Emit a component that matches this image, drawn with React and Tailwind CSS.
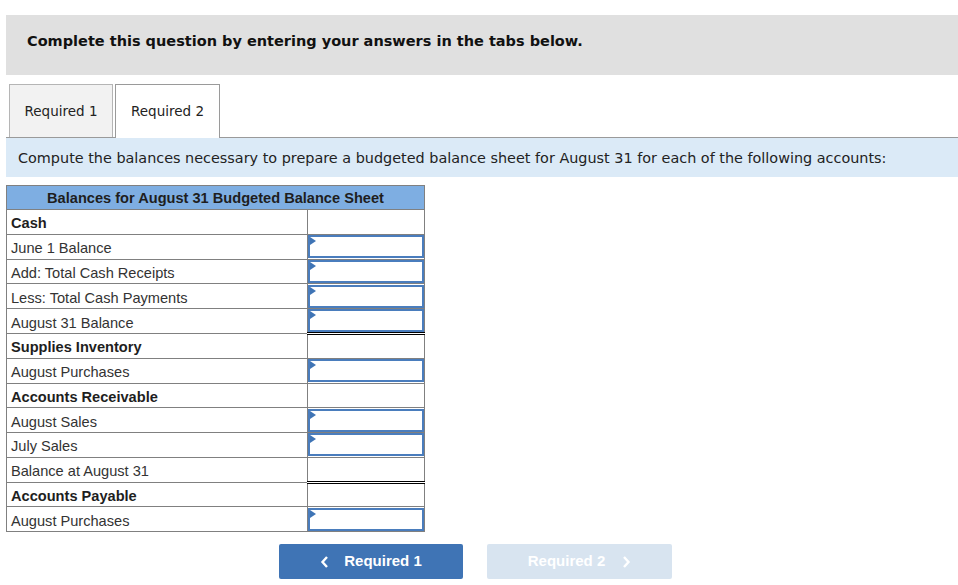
import React from 'react';

const rows = [
  { label: 'Cash', bold: true },
  { label: 'June 1 Balance', input: true },
  { label: 'Add: Total Cash Receipts', input: true },
  { label: 'Less: Total Cash Payments', input: true, line: 'single' },
  { label: 'August 31 Balance', input: true, line: 'double' },
  { label: 'Supplies Inventory', bold: true },
  { label: 'August Purchases', input: true },
  { label: 'Accounts Receivable', bold: true },
  { label: 'August Sales', input: true },
  { label: 'July Sales', input: true, line: 'single' },
  { label: 'Balance at August 31', line: 'double' },
  { label: 'Accounts Payable', bold: true },
  { label: 'August Purchases', input: true },
];

const AnswerCell = ({ input, line }) => {
  let lineClass = '';
  if (line === 'single') lineClass = 'border-b-black';
  if (line === 'double') lineClass = 'border-b-[3px] border-b-black border-double';
  return (
    <td className={`w-[117px] h-[24.75px] p-0 border border-[#808080] ${lineClass}`}>
      {input && (
        <div className="relative h-[23px] border-2 border-[#4a7dbd] bg-white">
          {/* little triangle marker */}
          <div className="absolute left-0 top-0 w-0 h-0 border-t-[4px] border-b-[4px] border-l-[6px] border-t-transparent border-b-transparent border-l-[#3f74b5]" />
        </div>
      )}
    </td>
  );
};

const App = () => {
  return (
    <div className="w-[958px] h-[585px] bg-white pt-[15px] pl-[6px]">
      {/* Instructions banner */}
      <div className="h-[60px] bg-[#e0e0e0] flex items-center pl-[21px] pb-[6px] font-['DejaVu_Sans',Verdana,sans-serif]">
        <p className="text-[14.5px] font-bold text-[#111]">
          Complete this question by entering your answers in the tabs below.
        </p>
      </div>

      {/* Tabs */}
      <div className="mt-[9px] flex items-end gap-[2px] pl-[3px] border-b border-[#9a9a9a] font-['DejaVu_Sans',Verdana,sans-serif] text-[13.5px] text-[#222]">
        <div className="w-[104px] h-[53px] flex items-center justify-center bg-[#f2f2f2] border border-b-0 border-[#b5b5b5]">
          Required 1
        </div>
        <div className="w-[105px] h-[54px] -mb-px flex items-center justify-center bg-white border border-b-0 border-[#9a9a9a]">
          Required 2
        </div>
      </div>

      <div className="h-[39px] bg-[#dbeaf7] flex items-center pl-[12px] pt-[2px] font-['DejaVu_Sans',Verdana,sans-serif] text-[14.4px] text-[#222]">
        Compute the balances necessary to prepare a budgeted balance sheet for August 31 for each of the following accounts:
      </div>

      {/* Table */}
      <table className="mt-[8px] w-[419px] border-collapse font-['Liberation_Sans',Arial,sans-serif] text-[14.6px] leading-[18px] text-[#333]">
        <thead>
          <tr>
            <th colSpan={2} className="h-[24px] bg-[#7eaee2] border border-[#808080] font-bold text-[#1e1e1e] text-center p-0">
              Balances for August 31 Budgeted Balance Sheet
            </th>
          </tr>
        </thead>
        <tbody>
          {rows.map((r, i) => (
            <tr key={i}>
              <td className={`h-[24.75px] px-[4px] pt-[3px] pb-0 border border-[#808080] ${r.bold ? 'font-bold text-[#1e1e1e]' : ''}`}>
                {r.label}
              </td>
              <AnswerCell input={r.input} line={r.line} />
            </tr>
          ))}
        </tbody>
      </table>

      {/* Navigation buttons */}
      <div className="mt-[12px] flex gap-[24px] pl-[273px] font-['Liberation_Sans',Arial,sans-serif] text-[15px] font-bold text-white">
        <button className="w-[184px] h-[35px] rounded-[2px] bg-[#3f74b5] flex items-center justify-center gap-[14px]">
          <svg width="10" height="14" viewBox="0 0 10 14" fill="none">
            <path d="M7 2L2.5 7L7 12" stroke="white" strokeWidth="2.4" />
          </svg>
          Required 1
        </button>
        <button className="w-[185px] h-[35px] rounded-[2px] bg-[#d8e4f0] flex items-center justify-center gap-[16px]">
          Required 2
          <svg width="10" height="14" viewBox="0 0 10 14" fill="none">
            <path d="M3 2L7.5 7L3 12" stroke="white" strokeWidth="2.4" />
          </svg>
        </button>
      </div>
    </div>
  );
};

export default App;
